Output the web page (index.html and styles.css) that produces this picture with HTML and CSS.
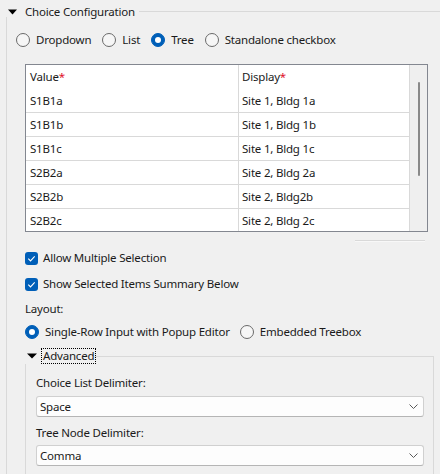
FILE: index.html
```html
<!DOCTYPE html>
<html>
<head>
<meta charset="utf-8">
<link rel="stylesheet" href="styles.css">
</head>
<body>
<div class="hdr">
  <svg class="tri" width="9" height="6" viewBox="0 0 9 6"><path d="M0 0.5 H9 L4.5 5.5 Z" fill="#000"/></svg>
  <span class="hdr-title">Choice Configuration</span>
  <span class="hdr-line"></span>
</div>
<div class="panel">
  <div class="radios top">
    <label class="radio"><span class="rb"></span>Dropdown</label>
    <label class="radio"><span class="rb"></span>List</label>
    <label class="radio"><span class="rb on"></span>Tree</label>
    <label class="radio"><span class="rb"></span>Standalone checkbox</label>
  </div>

  <div class="grid">
    <div class="grid-cols">
      <div class="row head"><div class="c1">Value<span class="req">*</span></div><div class="c2">Display<span class="req">*</span></div></div>
      <div class="row"><div class="c1">S1B1a</div><div class="c2">Site 1, Bldg 1a</div></div>
      <div class="row"><div class="c1">S1B1b</div><div class="c2">Site 1, Bldg 1b</div></div>
      <div class="row"><div class="c1">S1B1c</div><div class="c2">Site 1, Bldg 1c</div></div>
      <div class="row"><div class="c1">S2B2a</div><div class="c2">Site 2, Bldg 2a</div></div>
      <div class="row"><div class="c1">S2B2b</div><div class="c2">Site 2, Bldg2b</div></div>
      <div class="row"><div class="c1">S2B2c</div><div class="c2">Site 2, Bldg 2c</div></div>
    </div>
    <div class="vscroll"><div class="thumb"></div></div>
  </div>
  <div class="hscroll"></div>

  <label class="check first"><span class="cb"><svg width="13" height="13" viewBox="0 0 13 13"><path d="M3.3 6.7 L5.5 8.9 L9.7 4.4" fill="none" stroke="#fff" stroke-width="1.1"/></svg></span>Allow Multiple Selection</label>
  <label class="check second"><span class="cb"><svg width="13" height="13" viewBox="0 0 13 13"><path d="M3.3 6.7 L5.5 8.9 L9.7 4.4" fill="none" stroke="#fff" stroke-width="1.1"/></svg></span>Show Selected Items Summary Below</label>

  <div class="lbl layout">Layout:</div>
  <div class="radios bottom">
    <label class="radio r-single"><span class="rb on"></span>Single-Row Input with Popup Editor</label>
    <label class="radio"><span class="rb"></span>Embedded Treebox</label>
  </div>

  <div class="adv">
    <div class="adv-hdr">
      <svg class="tri2" width="10" height="6" viewBox="0 0 10 6"><path d="M0 0.5 H10 L5 5.5 Z" fill="#000"/></svg>
      <span class="adv-title">Advanced</span>
      <span class="adv-line"></span>
    </div>
    <div class="adv-body">
      <div class="lbl f1">Choice List Delimiter:</div>
      <div class="select s1"><span>Space</span><svg class="chev" width="9" height="5" viewBox="0 0 9 5"><path d="M0.5 0.5 L4.5 4.5 L8.5 0.5" fill="none" stroke="#5a5a5a" stroke-width="1"/></svg></div>
      <div class="lbl f2">Tree Node Delimiter:</div>
      <div class="select s2"><span>Comma</span><svg class="chev" width="9" height="5" viewBox="0 0 9 5"><path d="M0.5 0.5 L4.5 4.5 L8.5 0.5" fill="none" stroke="#5a5a5a" stroke-width="1"/></svg></div>
    </div>
  </div>
</div>
</body>
</html>
```

FILE: styles.css
```css
html, body {
  margin: 0;
  padding: 0;
  background: #f0f0f0;
  width: 440px;
  height: 474px;
  overflow: hidden;
}
body {
  font-family: "Noto Sans", "Open Sans", sans-serif;
  font-size: 11.5px;
  letter-spacing: -0.2px;
  line-height: 16px;
  color: #1a1a1a;
}
.hdr {
  display: flex;
  align-items: center;
  height: 24px;
}
.tri { margin-left: 8px; flex: none; }
.hdr-title { margin-left: 8px; }
.hdr-line {
  flex: 1;
  height: 1px;
  background: #d9d9d9;
  align-self: flex-start;
  margin-top: 11px;
  margin-left: 4px;
}
.panel {
  margin-left: 6px;
  margin-top: -7px;
  padding-top: 7px;
  border-left: 1px solid #d9d9d9;
  height: 460px;
}
.radios {
  display: flex;
  align-items: center;
  height: 18px;
}
.radios.top { margin-top: 7px; padding-left: 9px; }
.radio {
  display: flex;
  align-items: center;
  margin-right: 11px;
}
.rb {
  box-sizing: border-box;
  width: 14px;
  height: 14px;
  border-radius: 50%;
  border: 1px solid #6a6a6a;
  background: #f6f6f6;
  margin-right: 6px;
  flex: none;
  display: flex;
  align-items: center;
  justify-content: center;
}
.rb.on {
  border-color: #005fb8;
  background: #005fb8;
}
.rb.on::after {
  content: "";
  width: 6px;
  height: 6px;
  border-radius: 50%;
  background: #fff;
}
.grid {
  box-sizing: border-box;
  margin-top: 15px;
  margin-left: 18px;
  width: 403px;
  height: 168px;
  border: 1px solid #838790;
  display: flex;
  overflow: hidden;
}
.grid-cols {
  width: 384px;
  height: 166px;
  overflow: hidden;
  background: #fff;
}
.row {
  display: flex;
  height: 23px;
  border-bottom: 1px solid #d9d9d9;
}
.row.head {
  height: 24px;
  border-bottom: none;
}
.row > div {
  box-sizing: border-box;
  display: flex;
  align-items: center;
  border-right: 1px solid #d9d9d9;
  white-space: nowrap;
}
.c1 { width: 213px; padding-left: 4px; }
.c2 { width: 171px; padding-left: 3px; }
.req { color: #e0102a; }
.vscroll {
  width: 17px;
  height: 166px;
  background: #efefef;
  padding-top: 17px;
  box-sizing: border-box;
}
.thumb {
  margin-left: 8px;
  width: 2px;
  height: 94px;
  background: #898989;
  border-radius: 1px;
}
.hscroll {
  margin-top: 8px;
  margin-left: 348px;
  width: 70px;
  height: 1px;
  border-top: 1px solid #d9d9d9;
  background: #f8f8f8;
}
.check {
  display: flex;
  align-items: center;
  height: 18px;
  margin-left: 18px;
}
.check.first { margin-top: 7px; }
.check.second { margin-top: 8px; }
.cb {
  width: 13px;
  height: 13px;
  border-radius: 3px;
  background: #005fb8;
  margin-right: 5px;
  flex: none;
  display: flex;
}
.lbl { height: 16px; }
.layout { margin-top: 8px; margin-left: 18px; }
.radios.bottom { margin-top: 6px; padding-left: 18px; }
.r-single { margin-right: 10px; }
.adv {
  margin-top: 7px;
  margin-left: 18px;
  width: 409px;
}
.adv-hdr {
  display: flex;
  align-items: center;
  height: 16px;
}
.tri2 { margin-left: 2px; flex: none; }
.adv-title {
  margin-left: 5px;
  outline: 1px dotted #000;
  outline-offset: 0;
  padding: 0 1px;
  line-height: 14px;
}
.adv-line {
  flex: 1;
  align-self: flex-start;
  margin-top: 8px;
  height: 8px;
  border-top: 1px solid #d9d9d9;
  border-right: 1px solid #d9d9d9;
}
.adv-body {
  border-left: 1px solid #d9d9d9;
  border-right: 1px solid #d9d9d9;
  padding-left: 10px;
  height: 120px;
}
.f1 { padding-top: 11px; }
.f2 { margin-top: 8px; }
.select {
  box-sizing: border-box;
  width: 388px;
  height: 21px;
  margin-top: 5px;
  border: 1px solid #d0d0d0;
  border-bottom-color: #b5b5b5;
  border-radius: 3px;
  background: #fdfdfd;
  display: flex;
  align-items: center;
  padding-left: 3px;
  padding-right: 5px;
}
.select span { flex: 1; }
.s2 { margin-top: 4px; }
.chev { flex: none; }
```
